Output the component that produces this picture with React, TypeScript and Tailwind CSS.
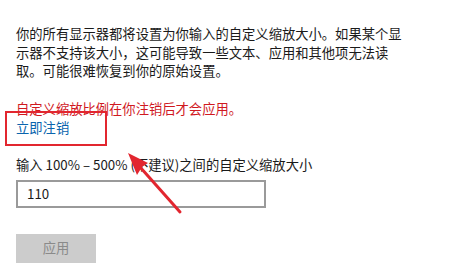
import React from "react";

const font = { fontFamily: '"Noto Sans CJK SC", "Noto Sans", sans-serif' };

export default function App() {
    return (
        <div className="relative w-[458px] h-[266px] bg-white overflow-hidden text-[13.3px] text-[#1a1a1a]" style={font}>
            <div className="flex flex-col pl-4 pt-[25px]">
                <p className="leading-[18.5px]">
                    你的所有显示器都将设置为你输入的自定义缩放大小。如果某个显<br />
                    示器不支持该大小，这可能导致一些文本、应用和其他项无法读<br />
                    取。可能很难恢复到你的原始设置。
                </p>
                <p className="mt-[18px] leading-[19px] text-[#d0191f]">自定义缩放比例在你注销后才会应用。</p>
                <a className="leading-[20px] text-[#0a64ad]">立即注销</a>
                <p className="mt-[17px] leading-[19px]">输入 100% – 500% (不建议)之间的自定义缩放大小</p>
                <div className="mt-[6px] w-[250px] h-[28px] border-2 border-[#9a9a9a] flex items-center pl-[9px]">
                    <span>110</span>
                </div>
                <button className="mt-[26px] w-[80px] h-[29px] bg-[#cccccc] text-[#8a8a8a] flex items-center justify-center">
                    应用
                </button>
            </div>

            {/* annotation box */}
            <div className="absolute left-[5px] top-[111px] w-[102px] h-[35px] border-2 border-[#e2262f]" />

            {/* annotation arrow */}
            <svg className="absolute left-0 top-0" width="458" height="266" viewBox="0 0 458 266">
                <line x1="180" y1="212" x2="140" y2="167" stroke="#e2262f" strokeWidth="3" strokeLinecap="round" />
                <polygon points="128,153 148,163 142,167 137,175" fill="#e2262f" />
            </svg>
        </div>
    );
}
